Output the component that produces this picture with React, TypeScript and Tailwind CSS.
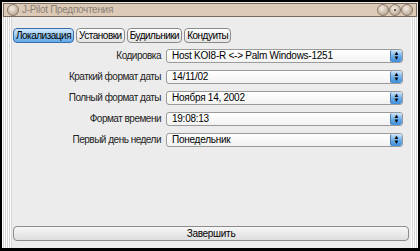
import React from "react";

const font = { fontFamily: '"Liberation Sans", Arial, sans-serif' };

const rows = [
  { label: "Кодировка", value: "Host KOI8-R <-> Palm Windows-1251" },
  { label: "Краткий формат даты", value: "14/11/02" },
  { label: "Полный формат даты", value: "Ноября 14, 2002" },
  { label: "Формат времени", value: "19:08:13" },
  { label: "Первый день недели", value: "Понедельник" },
];

const tabs = ["Локализация", "Установки", "Будильники", "Кондуиты"];

function Knob({ dot }: { dot?: boolean }) {
  return (
    <div className="flex h-[12px] w-[12px] items-center justify-center rounded-full border border-[#8a7a6a] bg-[radial-gradient(circle_at_40%_35%,#f4ece2,#c8b8a6_60%,#9a8a7a)]">
      {dot && <div className="h-[2px] w-[2px] bg-[#6a5a4a]" />}
    </div>
  );
}

function Select({ value }: { value: string }) {
  return (
    <div className="flex h-[14px] w-[237px] items-stretch overflow-hidden rounded-[3px] border border-[#9a9a9a] bg-gradient-to-b from-white to-[#f2f2f2]">
      <div className="flex flex-1 items-center pl-[5px] text-[10px] leading-none tracking-[-0.25px] text-black">
        {value}
      </div>
      <div className="flex w-[12px] flex-col items-center justify-center rounded-[2px] border-l border-[#4a7ab0] bg-gradient-to-b from-[#cfe6fb] via-[#6fb0ea] to-[#3e8ed8] text-[6px] leading-[5px] text-black">
        <span>▲</span>
        <span>▼</span>
      </div>
    </div>
  );
}

const stripe =
  "bg-[repeating-linear-gradient(90deg,#ffffff_0px,#ffffff_1px,#d6d6d6_1px,#d6d6d6_2px)]";

export default function App() {
  return (
    <div
      style={font}
      className="flex h-[251px] w-[420px] flex-col border-2 border-b-[3px] border-black bg-[#ececec]"
    >
      <div className="mx-[1px] mt-[1px] flex h-[14px] items-center justify-between border border-[#7a6a5a] bg-[#dccab6] pl-[3px] pr-[3px]">
        <div className="flex items-center gap-[3px]">
          <Knob />
          <span className="text-[10px] leading-none tracking-[-0.3px] text-[#8c8076]">
            J-Pilot Предпочтения
          </span>
        </div>
        <div className="flex items-center">
          <Knob />
          <Knob dot />
          <Knob />
        </div>
      </div>
      <div className="flex flex-1">
        <div className={`w-[10px] ${stripe}`} />
        <div className="flex flex-1 flex-col pb-[7px] pl-[1px] pr-[2px] pt-[11px]">
          <div className="flex gap-[2px]">
            {tabs.map((t, i) => (
              <div
                key={t}
                className={
                  i === 0
                    ? "flex h-[15px] items-center rounded-[4px] border border-[#3a6ea8] bg-gradient-to-b from-[#cfe8fc] to-[#5fa8e8] px-[2px] text-[10px] leading-none tracking-[-0.5px] text-black"
                    : "flex h-[15px] items-center rounded-[4px] border border-[#8a8a8a] bg-gradient-to-b from-white to-[#e4e4e4] px-[2px] text-[10px] leading-none tracking-[-0.5px] text-black"
                }
              >
                {t}
              </div>
            ))}
          </div>
          <div className="mt-[6px] flex flex-col gap-[7px]">
            {rows.map((r) => (
              <div key={r.label} className="flex items-center gap-[5px]">
                <div className="w-[148px] text-right text-[10px] leading-none tracking-[-0.5px] text-[#222]">
                  {r.label}
                </div>
                <Select value={r.value} />
              </div>
            ))}
          </div>
          <div className="flex-1" />
          <div className="flex h-[15px] w-[396px] items-center justify-center rounded-[4px] border border-[#8c8c8c] bg-gradient-to-b from-[#f6f6f6] to-[#dedede] text-[10px] leading-none tracking-[-0.3px] text-black">
            Завершить
          </div>
        </div>
        <div className={`w-[7px] ${stripe}`} />
      </div>
    </div>
  );
}
